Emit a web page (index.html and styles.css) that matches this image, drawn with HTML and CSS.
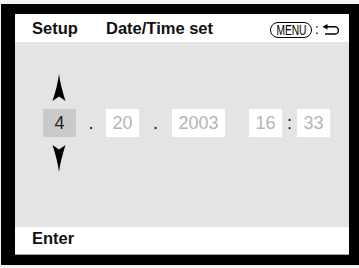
FILE: index.html
```html
<!DOCTYPE html>
<html>
<head>
<meta charset="utf-8">
<link rel="stylesheet" href="styles.css">
</head>
<body>
<div class="frame">
  <div class="screen">
    <div class="header">
      <span class="crumb">Setup</span>
      <span class="title">Date/Time set</span>
      <span class="menu-hint">
        <span class="pill"><span class="pill-text">MENU</span></span>
        <span class="colon">:</span>
        <svg class="back" width="19" height="12" viewBox="0 0 19 12">
          <path d="M0.5 2.8 L5.5 0 L5.5 5.6 Z" fill="#000"/>
          <path d="M4 2.8 H12.8 A3.6 3.6 0 0 1 12.8 10 H3" fill="none" stroke="#000" stroke-width="1.4"/>
        </svg>
      </span>
    </div>
    <div class="main">
      <div class="fields">
        <svg class="arrow up" width="14" height="27" viewBox="0 0 14 27">
          <path d="M7 0 C8 8 10.5 18 13.5 27 L7 22.5 L0.5 27 C3.5 18 6 8 7 0 Z" fill="#000"/>
        </svg>
        <div class="box active">4</div>
        <div class="sep s1">.</div>
        <div class="box b2">20</div>
        <div class="sep s2">.</div>
        <div class="box b3">2003</div>
        <div class="box b4">16</div>
        <div class="sep s3">:</div>
        <div class="box b5">33</div>
        <svg class="arrow down" width="14" height="27" viewBox="0 0 14 27">
          <path d="M7 27 C8 19 10.5 9 13.5 0 L7 4.5 L0.5 0 C3.5 9 6 19 7 27 Z" fill="#000"/>
        </svg>
      </div>
    </div>
    <div class="footer">
      <span class="crumb">Enter</span>
    </div>
  </div>
</div>
</body>
</html>
```

FILE: styles.css
```css
html, body {
  margin: 0;
  padding: 0;
}
body {
  background: #f2f2f2;
  width: 359px;
  height: 268px;
  overflow: hidden;
  font-family: "Liberation Sans", Arial, sans-serif;
}
.frame {
  margin: 4px 0 0 1px;
  width: 358px;
  height: 261px;
  box-sizing: border-box;
  background: #000;
  padding: 10px 10px 10px 14px;
}
.screen {
  width: 334px;
  height: 241px;
  display: flex;
  flex-direction: column;
}
.header {
  height: 28px;
  background: #fff;
  display: flex;
  align-items: center;
  padding-left: 17px;
  padding-right: 8px;
}
.crumb {
  font-weight: bold;
  font-size: 16.5px;
  color: #111;
  width: 74px;
}
.title {
  font-weight: bold;
  font-size: 16.5px;
  color: #111;
}
.menu-hint {
  margin-left: auto;
  display: flex;
  align-items: center;
  padding-top: 3px;
}
.pill {
  display: flex;
  align-items: center;
  justify-content: center;
  width: 40px;
  height: 14px;
  border: 1px solid #000;
  border-radius: 8px;
  overflow: hidden;
}
.pill-text {
  display: inline-block;
  font-size: 15.5px;
  line-height: 14px;
  color: #000;
  transform: scaleX(0.66);
  letter-spacing: -0.2px;
}
.colon {
  font-size: 14px;
  margin: 0 3px 0 3px;
  line-height: 13px;
}
.back {
  display: block;
}
.main {
  height: 185px;
  background: #e4e4e4;
  padding: 33px 0 0 28px;
  box-sizing: border-box;
}
.fields {
  display: grid;
  grid-template-columns: 33px 30px 33px 33px 53px 24px 33px 15px 33px;
  grid-template-rows: 27px 28px 27px;
  row-gap: 7px;
}
.arrow {
  grid-column: 1;
  justify-self: center;
  margin-left: -2px;
  display: block;
}
.arrow.up { grid-row: 1; margin-top: -1px; }
.arrow.down { grid-row: 3; margin-top: 1px; }
.box {
  grid-row: 2;
  background: #fff;
  color: #b4b4b4;
  font-size: 18px;
  line-height: 28px;
  text-align: center;
}
.box.active {
  grid-column: 1;
  background: #c9c9c9;
  color: #222;
}
.b2 { grid-column: 3; }
.b3 { grid-column: 5; }
.b4 { grid-column: 7; }
.b5 { grid-column: 9; }
.sep {
  grid-row: 2;
  font-size: 18px;
  line-height: 28px;
  text-align: center;
  color: #111;
}
.s1 { grid-column: 2; }
.s2 { grid-column: 4; }
.s3 { grid-column: 8; }
.footer {
  height: 28px;
  background: #fff;
  box-sizing: border-box;
  border-bottom: 1px solid #a8a8a8;
  display: flex;
  align-items: flex-start;
  padding: 1px 0 0 17px;
}
.footer .crumb {
  font-size: 16.5px;
  line-height: 20px;
}
```
